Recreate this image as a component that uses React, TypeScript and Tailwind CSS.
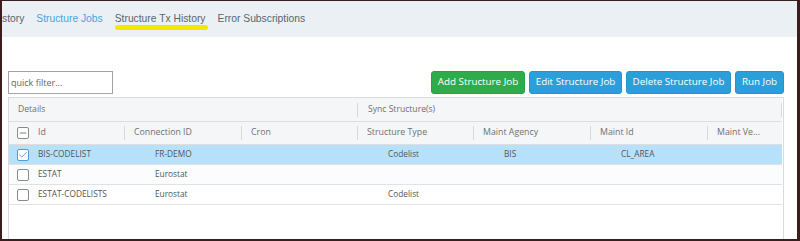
import { Check, Minus } from 'lucide-react';

const COLS = [
  { label: 'Id', w: 'w-[116px]' },
  { label: 'Connection ID', w: 'w-[117px]' },
  { label: 'Cron', w: 'w-[116px]' },
  { label: 'Structure Type', w: 'w-[116px]' },
  { label: 'Maint Agency', w: 'w-[117px]' },
  { label: 'Maint Id', w: 'w-[117px]' },
  { label: 'Maint Ve...', w: 'w-[117px]' },
];

const ROWS = [
  { cells: ['BIS-CODELIST', 'FR-DEMO', '', 'Codelist', 'BIS', 'CL_AREA', ''], selected: true },
  { cells: ['ESTAT', 'Eurostat', '', '', '', '', ''], selected: false },
  { cells: ['ESTAT-CODELISTS', 'Eurostat', '', 'Codelist', '', '', ''], selected: false },
];

function Box({ state }: { state: 'none' | 'checked' | 'partial' }) {
  return (
    <span
      className={
        'w-[12px] h-[12px] shrink-0 rounded-[2px] border bg-white flex items-center justify-center ' +
        (state === 'checked' ? 'border-[#4d9fdc]' : 'border-[#8a8a8a]')
      }
    >
      {state === 'checked' && <Check className="w-[10px] h-[10px] text-[#3c8fd0]" strokeWidth={2} />}
      {state === 'partial' && <Minus className="w-[10px] h-[10px] text-[#666]" strokeWidth={2} />}
    </span>
  );
}

export default function App() {
  return (
    <div className="w-[800px] h-[241px] bg-white border-t border-l-2 border-r-[3px] border-b-2 border-[#3b1d1d] overflow-hidden flex flex-col">
      {/* Tabs */}
      <nav className="h-[36px] shrink-0 bg-[#ebf0f4] flex items-center gap-[12px] text-[10.3px] font-['Liberation_Sans',sans-serif] whitespace-nowrap">
        <span className="text-[#5a6470]">story</span>
        <span className="text-[#4ba3dd]">Structure Jobs</span>
        <span className="relative text-[#5a6470]">
          Structure Tx History
          <span className="absolute left-0 right-[-2px] top-[14px] h-[5px] rounded-full bg-[#eeeb00]" />
        </span>
        <span className="text-[#5a6470]">Error Subscriptions</span>
      </nav>

      <div className="flex-1 flex flex-col pl-[6px] pr-[13px] pt-[34px] min-h-0 font-['Open_Sans',sans-serif]">
        {/* Toolbar */}
        <div className="flex items-center justify-between h-[23px] shrink-0">
          <input
            placeholder="quick filter..."
            className="w-[105px] h-[23px] border border-[#a3a3a3] px-[2px] text-[9px] text-[#555] placeholder-[#666] outline-none"
          />
          <div className="flex gap-[4px] text-[9.8px] text-white">
            <button className="h-[23px] w-[94px] rounded-[3px] bg-[#2eac4c] border border-[#2a9e45]">Add Structure Job</button>
            <button className="h-[23px] w-[93px] rounded-[3px] bg-[#2b9fd9] border border-[#2693cb]">Edit Structure Job</button>
            <button className="h-[23px] w-[105px] rounded-[3px] bg-[#2b9fd9] border border-[#2693cb]">Delete Structure Job</button>
            <button className="h-[23px] w-[49px] rounded-[3px] bg-[#2b9fd9] border border-[#2693cb]">Run Job</button>
          </div>
        </div>

        {/* Grid */}
        <div className="mt-[3px] flex-1 border border-[#dadada] border-b-0 overflow-hidden flex flex-col">
          <div className="w-[773px] overflow-hidden">
            {/* Group header */}
            <div className="h-[24px] bg-[#f5f6f7] border-b border-[#dedede] flex items-center text-[8.6px] text-[#707070]">
              <div className="w-[349px] pl-[9px] flex items-center justify-between">
                <span>Details</span>
                <span className="w-px h-[14px] bg-[#d8d8d8]" />
              </div>
              <div className="flex-1 pl-[10px] flex items-center justify-between">
                <span>Sync Structure(s)</span>
                <span className="w-px h-[14px] bg-[#d8d8d8]" />
              </div>
            </div>

            {/* Column header */}
            <div className="h-[23px] bg-[#f5f6f7] border-b border-[#dedede] flex items-center text-[8.8px] text-[#707070] whitespace-nowrap">
              {COLS.map((c, i) => (
                <div key={c.label} className={c.w + ' shrink-0 flex items-center justify-between'}>
                  {i === 0 ? (
                    <span className="pl-[8px] flex items-center gap-[9px]">
                      <Box state="partial" />
                      {c.label}
                    </span>
                  ) : (
                    <span className="pl-[9px]">{c.label}</span>
                  )}
                  <span className="w-px h-[14px] bg-[#d8d8d8]" />
                </div>
              ))}
            </div>

            {/* Rows */}
            {ROWS.map((r, ri) => (
              <div
                key={ri}
                className={
                  'h-[20px] border-b border-[#e2e2e2] flex items-center text-[8.3px] text-[#555] whitespace-nowrap ' +
                  (r.selected ? 'bg-[#b7e1fb]' : ri % 2 === 1 ? 'bg-[#fbfcfe]' : 'bg-white')
                }
              >
                {COLS.map((c, i) => (
                  <div key={c.label} className={c.w + ' shrink-0'}>
                    {i === 0 ? (
                      <span className="pl-[8px] flex items-center gap-[9px]">
                        <Box state={r.selected ? 'checked' : 'none'} />
                        {r.cells[0]}
                      </span>
                    ) : (
                      <span className="pl-[30px]">{r.cells[i]}</span>
                    )}
                  </div>
                ))}
              </div>
            ))}
          </div>
        </div>
      </div>
    </div>
  );
}
